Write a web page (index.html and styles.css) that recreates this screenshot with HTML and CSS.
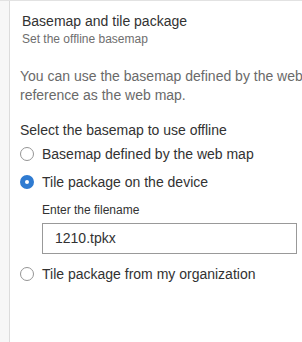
FILE: index.html
```html
<!DOCTYPE html>
<html lang="en">
  <head>
    <meta charset="UTF-8" />
    <meta name="viewport" content="width=device-width, initial-scale=1.0" />
    <title>Basemap and tile package</title>
    <link rel="stylesheet" href="styles.css">
  </head>
  <body>
    <div class="shell">
      <div class="rail"></div>
      <div class="panel">
        <div class="panel-header">
          <div class="panel-title">Basemap and tile package</div>
          <div class="panel-subtitle">Set the offline basemap</div>
        </div>
        <div class="panel-body">
          <p class="intro">
            You can use the basemap defined by the web map or a tile package with the same spatial<br>
            reference as the web map.
          </p>
          <div class="group-label">Select the basemap to use offline</div>
          <label class="radio-row">
            <span class="radio"></span>
            Basemap defined by the web map
          </label>
          <label class="radio-row">
            <span class="radio checked"></span>
            Tile package on the device
          </label>
          <div class="file-field">
            <div class="field-label">Enter the filename</div>
            <div class="text-input">1210.tpkx</div>
          </div>
          <label class="radio-row">
            <span class="radio"></span>
            Tile package from my organization
          </label>
        </div>
      </div>
    </div>
  </body>
</html>
```

FILE: styles.css
```css
body {
  margin: 0;
  font-family: "Liberation Sans", Arial, sans-serif;
  color: #323232;
  background: #ffffff;
  overflow: hidden;
}
.shell {
  display: flex;
  height: 342px;
  border-top: 1px solid #e2e2e2;
  box-sizing: border-box;
}
.rail {
  width: 9px;
  background-color: #f7f7f7;
  border-right: 1px solid #dcdcdc;
  flex-shrink: 0;
}
.panel {
  width: 640px;
  flex-shrink: 0;
}
.panel-header {
  padding: 11px 12px 0 12px;
}
.panel-title {
  font-size: 14px;
  line-height: 18px;
}
.panel-subtitle {
  margin-top: 1px;
  font-size: 12px;
  line-height: 16px;
  color: #6e6e6e;
}
.panel-body {
  padding: 20px 10px 0 10px;
}
.intro {
  margin: 0;
  font-size: 14px;
  line-height: 19px;
  color: #6a6a6a;
  white-space: nowrap;
}
.group-label {
  margin-top: 16px;
  font-size: 14px;
  line-height: 19px;
}
.radio-row {
  display: flex;
  align-items: center;
  height: 28px;
  font-size: 14px;
}
.radio {
  width: 14px;
  height: 14px;
  margin-right: 8px;
  box-sizing: border-box;
  border: 1px solid #959595;
  border-radius: 50%;
  background: #ffffff;
  flex-shrink: 0;
}
.radio.checked {
  border: 5px solid #2f7bd1;
}
.file-field {
  padding: 6px 0 6px 22px;
}
.field-label {
  font-size: 12px;
  line-height: 16px;
  margin-bottom: 5px;
}
.text-input {
  width: 255px;
  height: 31px;
  box-sizing: border-box;
  border: 1px solid #999999;
  padding-left: 12px;
  font-size: 14px;
  line-height: 29px;
}
```
